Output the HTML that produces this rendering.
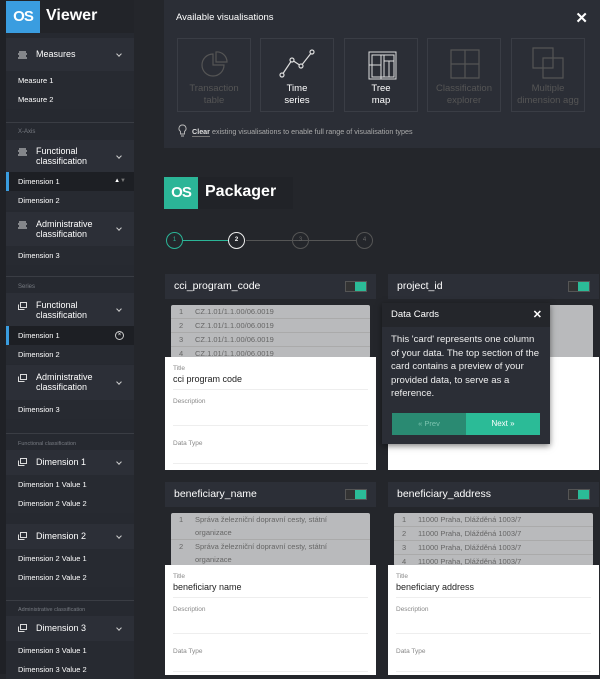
<!DOCTYPE html>
<html><head><style>
*{margin:0;padding:0;box-sizing:border-box}
body{width:600px;height:674px;overflow:hidden;background:#24262b;font-family:"Liberation Sans",sans-serif;color:#fff;position:relative}
.a{position:absolute}
.sb{left:6px;width:128px}
.hd{background:#2c2f37;font-size:9px;color:#fff}
.row{background:#272a31;font-size:7.5px;color:#fff;padding-left:12px;height:19px;line-height:19px}
.lab{font-size:6px;color:#777b82;padding-left:12px}
.chev{position:absolute;right:13px;top:50%;margin-top:-3px;width:4px;height:4px;border-right:1.1px solid #ccc;border-bottom:1.1px solid #ccc;transform:rotate(45deg)}
.ic{position:absolute;left:12px;width:9px;height:8px}
.ht{position:absolute;left:30px;line-height:10px}
.box{position:absolute;top:38px;width:74px;height:74px;border:1px solid #3a3d45;font-size:9.5px;text-align:center;line-height:12px}
.box .t{position:absolute;top:44px;left:0;right:0}
.card{position:absolute;width:211px}
.ch{height:25px;background:#2c2f37;font-size:10.5px;padding-left:9px;line-height:25px;position:relative}
.tg{position:absolute;right:9px;top:7px;width:22px;height:11px;border:1px solid #555;background:#333}
.tg i{position:absolute;right:0;top:0;width:11px;height:9px;background:#2bbb97}
.gr{position:absolute;left:6px;width:199px;background:#b9babc;border-radius:2px;overflow:hidden;font-size:7.5px;color:#666}
.gr div{height:14px;line-height:14px;border-bottom:1px solid #aaa;padding-left:8px}
.gr b{font-weight:normal;display:inline-block;width:16px}
.wh{position:absolute;left:0;width:211px;background:#fff;color:#333}
.f{margin:0 8px 0 8px;border-bottom:1px solid #eee;position:relative}
.fl{font-size:6.5px;color:#888;padding-top:8px}
.fv{font-size:9px;color:#222;margin-top:2px}
.st{position:absolute;top:232px;width:17px;height:17px;border-radius:50%;border:1.3px solid #555;font-size:6px;line-height:14px;text-align:center;color:#666}
</style></head><body>
<!-- sidebar -->
<div class="a" style="left:0;top:0;width:6px;height:674px;background:#1f2126"></div>
<div class="a sb" style="top:0;height:674px;background:#262930"></div>
<div class="a" style="left:6px;top:0;width:128px;height:33px;background:#222429"></div>
<div class="a" style="left:6px;top:1px;width:34px;height:32px;background:#3a9de0;font-size:15px;font-weight:bold;line-height:32px;text-align:center;letter-spacing:-1px">OS</div>
<div class="a" style="left:46px;top:7px;font-size:16px;font-weight:bold">Viewer</div>

<div class="a sb hd" style="top:38px;height:33px"><svg class="ic" style="top:13px" viewBox="0 0 9 8"><path d="M1 1h7M0 3h9M1 5h7M0 7h9" stroke="#ddd" stroke-width="1.1"/></svg><span class="ht" style="top:11px">Measures</span><i class="chev"></i></div>
<div class="a sb row" style="top:71px">Measure 1</div>
<div class="a sb row" style="top:90px">Measure 2</div>
<div class="a sb" style="top:122px;height:1px;background:#3a3d44"></div>
<div class="a sb lab" style="top:129px">X-Axis</div>
<div class="a sb hd" style="top:140px;height:33px"><svg class="ic" style="top:8px" viewBox="0 0 9 8"><path d="M1 1h7M0 3h9M1 5h7M0 7h9" stroke="#ddd" stroke-width="1.1"/></svg><span class="ht" style="top:6px">Functional<br>classification</span><i class="chev"></i></div>
<div class="a sb row" style="top:172px;background:#1d1f24">Dimension 1<span class="a" style="right:8px;top:0;font-size:6px;color:#fff">▲<span style="color:#777">▼</span></span></div>
<div class="a" style="left:6px;top:172px;width:3px;height:19px;background:#3a9de0"></div>
<div class="a sb row" style="top:191px">Dimension 2</div>
<div class="a sb hd" style="top:212px;height:34px"><svg class="ic" style="top:9px" viewBox="0 0 9 8"><path d="M1 1h7M0 3h9M1 5h7M0 7h9" stroke="#ddd" stroke-width="1.1"/></svg><span class="ht" style="top:7px">Administrative<br>classification</span><i class="chev"></i></div>
<div class="a sb row" style="top:246px">Dimension 3</div>
<div class="a sb" style="top:276px;height:1px;background:#3a3d44"></div>
<div class="a sb lab" style="top:284px">Series</div>
<div class="a sb hd" style="top:293px;height:33px"><svg class="ic" style="top:9px" viewBox="0 0 9 8"><path d="M2.5 .5h6v5h-6z M.5 2.5v5h6" fill="none" stroke="#ddd" stroke-width="1"/></svg><span class="ht" style="top:7px">Functional<br>classification</span><i class="chev"></i></div>
<div class="a sb row" style="top:326px;background:#1d1f24">Dimension 1<span class="a" style="right:10px;top:5px;width:9px;height:9px;border:1px solid #ccc;border-radius:50%;font-size:6px;line-height:7px;text-align:center">×</span></div>
<div class="a" style="left:6px;top:326px;width:3px;height:19px;background:#3a9de0"></div>
<div class="a sb row" style="top:345px">Dimension 2</div>
<div class="a sb hd" style="top:365px;height:35px"><svg class="ic" style="top:9px" viewBox="0 0 9 8"><path d="M2.5 .5h6v5h-6z M.5 2.5v5h6" fill="none" stroke="#ddd" stroke-width="1"/></svg><span class="ht" style="top:7px">Administrative<br>classification</span><i class="chev"></i></div>
<div class="a sb row" style="top:400px">Dimension 3</div>
<div class="a sb" style="top:433px;height:1px;background:#3a3d44"></div>
<div class="a sb lab" style="top:441px;font-size:5.5px">Functional classification</div>
<div class="a sb hd" style="top:450px;height:25px"><svg class="ic" style="top:8px" viewBox="0 0 9 8"><path d="M2.5 .5h6v5h-6z M.5 2.5v5h6" fill="none" stroke="#ddd" stroke-width="1"/></svg><span class="ht" style="top:7px">Dimension 1</span><i class="chev"></i></div>
<div class="a sb row" style="top:475px">Dimension 1 Value 1</div>
<div class="a sb row" style="top:494px">Dimension 2 Value 2</div>
<div class="a sb hd" style="top:524px;height:25px"><svg class="ic" style="top:8px" viewBox="0 0 9 8"><path d="M2.5 .5h6v5h-6z M.5 2.5v5h6" fill="none" stroke="#ddd" stroke-width="1"/></svg><span class="ht" style="top:7px">Dimension 2</span><i class="chev"></i></div>
<div class="a sb row" style="top:549px">Dimension 2 Value 1</div>
<div class="a sb row" style="top:568px">Dimension 2 Value 2</div>
<div class="a sb" style="top:600px;height:1px;background:#3a3d44"></div>
<div class="a sb lab" style="top:607px;font-size:5.5px">Administrative classification</div>
<div class="a sb hd" style="top:616px;height:25px"><svg class="ic" style="top:8px" viewBox="0 0 9 8"><path d="M2.5 .5h6v5h-6z M.5 2.5v5h6" fill="none" stroke="#ddd" stroke-width="1"/></svg><span class="ht" style="top:7px">Dimension 3</span><i class="chev"></i></div>
<div class="a sb row" style="top:641px">Dimension 3 Value 1</div>
<div class="a sb row" style="top:660px">Dimension 3 Value 2</div>

<!-- vis panel -->
<div class="a" style="left:164px;top:0;width:436px;height:148px;background:#2b2e36">
<div class="a" style="left:12px;top:12px;font-size:9.5px">Available visualisations</div>
<div class="a" style="right:12px;top:9px;font-size:15px;font-weight:bold">✕</div>
<div class="box" style="left:13px;color:#555"><svg class="a" style="left:22px;top:10px" width="30" height="30" viewBox="0 0 30 30"><path d="M13 5a11 11 0 1 0 11 11H13z M16 3v10h11A10 10 0 0 0 16 3z" fill="none" stroke="#555" stroke-width="1.2"/></svg><div class="t">Transaction<br>table</div></div>
<div class="box" style="left:96px;color:#fff"><svg class="a" style="left:17px;top:9px" width="40" height="30" viewBox="0 0 40 30"><path d="M4 27L14 12L23 18L34 4" fill="none" stroke="#ddd" stroke-width="1.2"/><g fill="#2b2e36" stroke="#ddd" stroke-width="1.2"><circle cx="4" cy="27" r="2"/><circle cx="14" cy="12" r="2"/><circle cx="23" cy="18" r="2"/><circle cx="34" cy="4" r="2"/></g></svg><div class="t">Time<br>series</div></div>
<div class="box" style="left:180px;color:#fff"><svg class="a" style="left:23px;top:12px" width="29" height="29" viewBox="0 0 29 29"><path d="M1 1h27v27H1z M1 14h12 M13 4v24 M4 4h22v22H4z M16 4v22 M16 10h10 M21 10v16" fill="none" stroke="#ddd" stroke-width="1"/></svg><div class="t">Tree<br>map</div></div>
<div class="box" style="left:263px;color:#555"><svg class="a" style="left:22px;top:10px" width="30" height="30" viewBox="0 0 30 30"><path d="M1 1h28v28H1z M15 1v28 M1 15h28" fill="none" stroke="#555" stroke-width="1.2"/></svg><div class="t">Classification<br>explorer</div></div>
<div class="box" style="left:347px;color:#555"><svg class="a" style="left:20px;top:8px" width="32" height="32" viewBox="0 0 32 32"><path d="M1 1h20v20H1z M11 11h20v20H11z" fill="none" stroke="#555" stroke-width="1.2"/></svg><div class="t">Multiple<br>dimension agg</div></div>
<svg class="a" style="left:14px;top:124px" width="9" height="13" viewBox="0 0 9 13"><path d="M4.5 1a3.5 3.5 0 0 0-2 6.4V10h4V7.4a3.5 3.5 0 0 0-2-6.4z M3 12h3" fill="none" stroke="#bbb" stroke-width="0.9"/></svg>
<div class="a" style="left:28px;top:127px;font-size:7.2px;color:#aaa"><b style="color:#ddd;border-bottom:1px solid #777">Clear</b> existing visualisations to enable full range of visualisation types</div>
</div>

<!-- packager -->
<div class="a" style="left:164px;top:177px;width:129px;height:32px;background:#212328"></div>
<div class="a" style="left:164px;top:177px;width:34px;height:32px;background:#2bb597;font-size:15px;font-weight:bold;line-height:32px;text-align:center;letter-spacing:-1px">OS</div>
<div class="a" style="left:205px;top:183px;font-size:16px;font-weight:bold">Packager</div>
<div class="a" style="left:183px;top:240px;width:46px;height:1.3px;background:#2bb597"></div>
<div class="a" style="left:246px;top:240px;width:111px;height:1.3px;background:#555"></div>
<div class="st" style="left:166px;border-color:#2bb597;color:#2bb597">1</div>
<div class="st" style="left:228px;border-color:#eee;color:#fff;font-weight:bold">2</div>
<div class="st" style="left:292px">3</div>
<div class="st" style="left:356px">4</div>

<!-- cards row 1 -->
<div class="card" style="left:165px;top:274px;height:196px">
<div class="ch">cci_program_code<span class="tg"><i></i></span></div>
<div class="gr" style="top:31px;height:53px"><div><b>1</b>CZ.1.01/1.1.00/06.0019</div><div><b>2</b>CZ.1.01/1.1.00/06.0019</div><div><b>3</b>CZ.1.01/1.1.00/06.0019</div><div><b>4</b>CZ.1.01/1.1.00/06.0019</div></div>
<div class="wh" style="top:83px;height:113px"><div class="f" style="height:33px"><div class="fl">Title</div><div class="fv">cci program code</div></div><div class="f" style="height:36px"><div class="fl">Description</div></div><div class="f" style="height:38px;border-color:#eee"><div class="fl" style="padding-top:14px">Data Type</div></div></div>
</div>
<div class="card" style="left:388px;top:274px;height:196px">
<div class="ch">project_id<span class="tg"><i></i></span></div>
<div class="gr" style="top:31px;height:53px"></div>
<div class="wh" style="top:83px;height:113px"></div>
</div>
<!-- tooltip -->
<div class="a" style="left:382px;top:303px;width:168px;height:141px;background:#2b2e36;box-shadow:0 2px 6px rgba(0,0,0,.5)">
<div style="height:24px;background:#24262b;font-size:9.5px;line-height:24px;padding-left:9px;position:relative">Data Cards<span class="a" style="right:8px;top:0;font-size:11px;font-weight:bold">✕</span></div>
<div style="font-size:9.6px;line-height:13.5px;padding:6px 10px 0 9px;color:#eee">This 'card' represents one column of your data. The top section of the card contains a preview of your provided data, to serve as a reference.</div>
<div class="a" style="left:10px;top:110px;width:74px;height:22px;background:#2a8a72;font-size:7.5px;line-height:22px;text-align:center;color:#7cc4b0">« Prev</div>
<div class="a" style="left:84px;top:110px;width:74px;height:22px;background:#2bbb97;font-size:8px;line-height:22px;text-align:center">Next »</div>
</div>
<div class="a" style="left:376px;top:368px;width:0;height:0;border:6px solid transparent;border-right-color:#2b2e36"></div>

<!-- cards row 2 -->
<div class="card" style="left:165px;top:482px;height:192px">
<div class="ch">beneficiary_name<span class="tg"><i></i></span></div>
<div class="gr" style="top:31px;height:53px;line-height:13px"><div style="height:27px;line-height:13px;padding-top:0"><b style="vertical-align:top">1</b><span style="display:inline-block;width:160px">Správa železniční dopravní cesty, státní organizace</span></div><div style="height:27px;line-height:13px"><b style="vertical-align:top">2</b><span style="display:inline-block;width:160px">Správa železniční dopravní cesty, státní organizace</span></div></div>
<div class="wh" style="top:83px;height:110px"><div class="f" style="height:33px"><div class="fl">Title</div><div class="fv">beneficiary name</div></div><div class="f" style="height:36px"><div class="fl">Description</div></div><div class="f" style="height:38px"><div class="fl" style="padding-top:14px">Data Type</div></div></div>
</div>
<div class="card" style="left:388px;top:482px;height:192px">
<div class="ch">beneficiary_address<span class="tg"><i></i></span></div>
<div class="gr" style="top:31px;height:53px"><div><b>1</b>11000 Praha, Dlážděná 1003/7</div><div><b>2</b>11000 Praha, Dlážděná 1003/7</div><div><b>3</b>11000 Praha, Dlážděná 1003/7</div><div><b>4</b>11000 Praha, Dlážděná 1003/7</div></div>
<div class="wh" style="top:83px;height:110px"><div class="f" style="height:33px"><div class="fl">Title</div><div class="fv">beneficiary address</div></div><div class="f" style="height:36px"><div class="fl">Description</div></div><div class="f" style="height:38px"><div class="fl" style="padding-top:14px">Data Type</div></div></div>
</div>
</body></html>
